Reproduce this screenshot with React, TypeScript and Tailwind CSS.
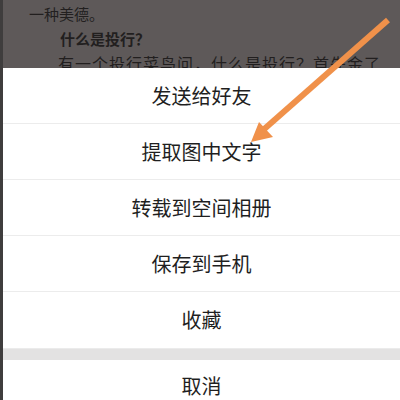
import React from 'react';

const items = ['发送给好友', '提取图中文字', '转载到空间相册', '保存到手机', '收藏'];

const font = { fontFamily: '"Noto Sans CJK SC", "Noto Sans", sans-serif' };

export default function App() {
  return (
    <div className="relative w-[400px] h-[400px] overflow-hidden flex bg-[#3d3b3b]" style={font}>
      <div className="w-[3px] shrink-0 bg-[#3f3d3d]" />
      <div className="flex-1 flex flex-col">
        {/* dimmed page behind the sheet */}
        <div className="h-[68px] shrink-0 bg-[#5e5959] overflow-hidden text-[#221f1f] leading-[25px]" style={{ fontFamily: '"Noto Sans CJK SC", serif' }}>
          <div className="pl-[26px] pt-[1px] text-[15px]">一种美德。</div>
          <div className="pl-[57px] text-[15px] font-bold">什么是投行？</div>
          <div className="pl-[55px] text-[16px] tracking-[1px] whitespace-nowrap">有一个投行菜鸟问，什么是投行？首先金了</div>
        </div>

        {/* action sheet */}
        <div className="flex-1 bg-white flex flex-col">
          {items.map((t, i) => (
            <div
              key={t}
              className={`h-[56px] shrink-0 flex items-center justify-center text-[20px] text-[#1f1f1f] ${i < items.length - 1 ? 'border-b border-[#ececec]' : ''}`}
            >
              {t}
            </div>
          ))}
          <div className="h-[12px] shrink-0 bg-[#e3e2e2] border-t border-[#ebebeb]" />
          <div className="h-[52px] shrink-0 flex items-center justify-center text-[20px] text-[#1f1f1f]">取消</div>
        </div>
      </div>

      {/* annotation arrow */}
      <svg className="absolute left-0 top-0" width="400" height="400" viewBox="0 0 400 400">
        <line x1="388" y1="20" x2="262" y2="131" stroke="#f0914a" strokeWidth="6" strokeLinecap="butt" />
        <polygon points="251,142 259,122 273,137" fill="#f0914a" />
      </svg>
    </div>
  );
}
